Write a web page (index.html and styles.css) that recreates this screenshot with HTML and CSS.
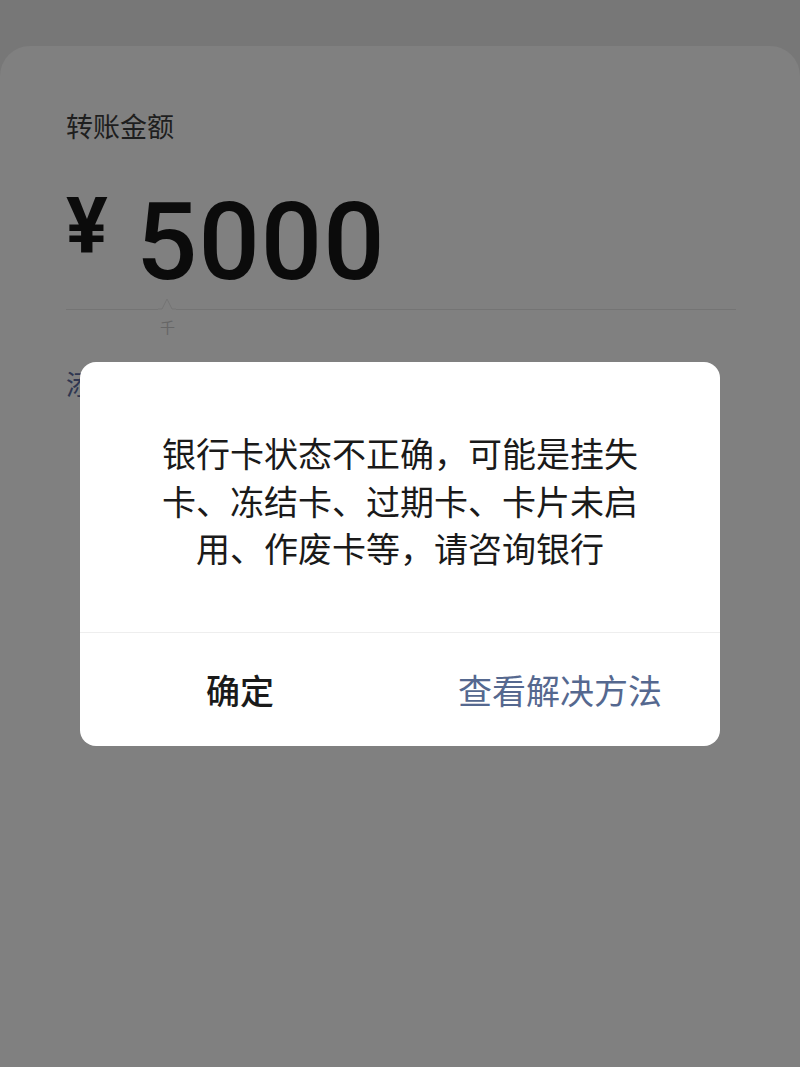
FILE: index.html
```html
<!DOCTYPE html>
<html lang="zh-CN">
<head>
<meta charset="utf-8">
<title>转账</title>
<link rel="stylesheet" href="styles.css">
</head>
<body>
<div class="screen">
  <div class="card">
    <div class="label">转账金额</div>
    <div class="amount">
      <span class="yen">¥</span>
      <span class="num">5000</span>
    </div>
    <div class="underline">
      <svg class="caret" width="18" height="14" viewBox="0 0 18 14"><path d="M0 13 L4 13 L9 3 L14 13 L18 13" fill="none" stroke="#747474" stroke-width="1"/></svg>
    </div>
    <div class="unit">千</div>
    <div class="note">添加转账说明</div>
  </div>
  <div class="dialog">
    <div class="msg">银行卡状态不正确，可能是挂失卡、冻结卡、过期卡、卡片未启用、作废卡等，请咨询银行</div>
    <div class="actions">
      <div class="btn ok">确定</div>
      <div class="btn link">查看解决方法</div>
    </div>
  </div>
</div>
</body>
</html>
```
FILE: styles.css
```css
* { box-sizing: border-box; }
html, body {
  margin: 0;
  padding: 0;
  background: #777777;
  font-family: "Noto Sans CJK SC", "Noto Sans", sans-serif;
}
.screen {
  position: relative;
  width: 800px;
  height: 1067px;
  overflow: hidden;
  padding-top: 46px;
}
.card {
  background: #808080;
  border-radius: 30px 30px 0 0;
  height: 1021px;
  padding: 61px 64px 0 66px;
}
.label {
  font-size: 27px;
  line-height: 38px;
  color: #1e1e1e;
}
.amount {
  display: flex;
  align-items: flex-start;
  margin-top: 43px;
  height: 108px;
}
.yen {
  font-family: Roboto, "Liberation Sans", sans-serif;
  font-weight: 700;
  font-size: 78px;
  line-height: 1;
  color: #0b0b0b;
  margin-top: 0;
  width: 70px;
}
.num {
  font-family: Roboto, "Liberation Sans", sans-serif;
  font-weight: 500;
  font-size: 108px;
  line-height: 1;
  letter-spacing: 1px;
  color: #0b0b0b;
}
.underline {
  position: relative;
  margin-top: 13px;
  height: 1px;
  background: #747474;
}
.caret {
  position: absolute;
  left: 92px;
  top: -13px;
  background: #808080;
}
.unit {
  margin-left: 94px;
  margin-top: 6px;
  font-size: 15px;
  line-height: 22px;
  color: #666666;
}
.note {
  margin-top: 27px;
  font-size: 27px;
  line-height: 38px;
  color: #2f3650;
}
.dialog {
  position: absolute;
  left: 80px;
  top: 362px;
  width: 640px;
  height: 384px;
  background: #ffffff;
  border-radius: 16px;
  display: flex;
  flex-direction: column;
}
.msg {
  padding: 67px 80px 0;
  height: 271px;
  font-size: 34px;
  line-height: 47.5px;
  color: #1a1a1a;
  text-align: center;
  border-bottom: 1px solid #eeeeee;
}
.actions {
  flex: 1;
  display: flex;
}
.btn {
  flex: 1;
  display: flex;
  align-items: center;
  justify-content: center;
  font-size: 34px;
}
.ok {
  color: #1a1a1a;
  font-weight: 500;
}
.link {
  color: #55688f;
}
```
